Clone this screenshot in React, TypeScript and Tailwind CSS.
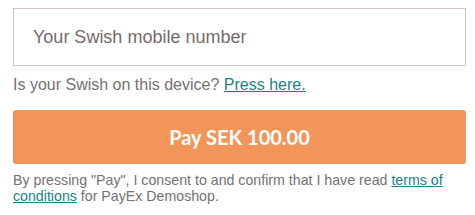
export default function App() {
  return (
    <div className="w-[475px] h-[215px] bg-white px-[13px] pt-[8px] font-['Liberation_Sans',Arial,sans-serif]">
      <div className="w-[453px] h-[58px] border border-[#d4c7bd] flex items-center pl-[19px]">
        <span className="text-[18px] text-[#776a68] leading-none">Your Swish mobile number</span>
      </div>
      <p className="mt-[9px] text-[16px] leading-[20px] text-[#747272]">
        Is your Swish on this device?{" "}
        <a href="#" className="text-[#1d7f8b] underline">
          Press here.
        </a>
      </p>
      <button className="mt-[15px] w-[453px] h-[54px] rounded-[3px] bg-[#f2955a] text-white text-[20px] font-bold font-['Lato',sans-serif] flex items-center justify-center">
        Pay SEK 100.00
      </button>
      <p className="mt-[8px] text-[14.2px] leading-[16px] text-[#747272]">
        By pressing "Pay", I consent to and confirm that I have read{" "}
        <a href="#" className="text-[#1d7f8b] underline">
          terms of conditions
        </a>{" "}
        for PayEx Demoshop.
      </p>
    </div>
  );
}
